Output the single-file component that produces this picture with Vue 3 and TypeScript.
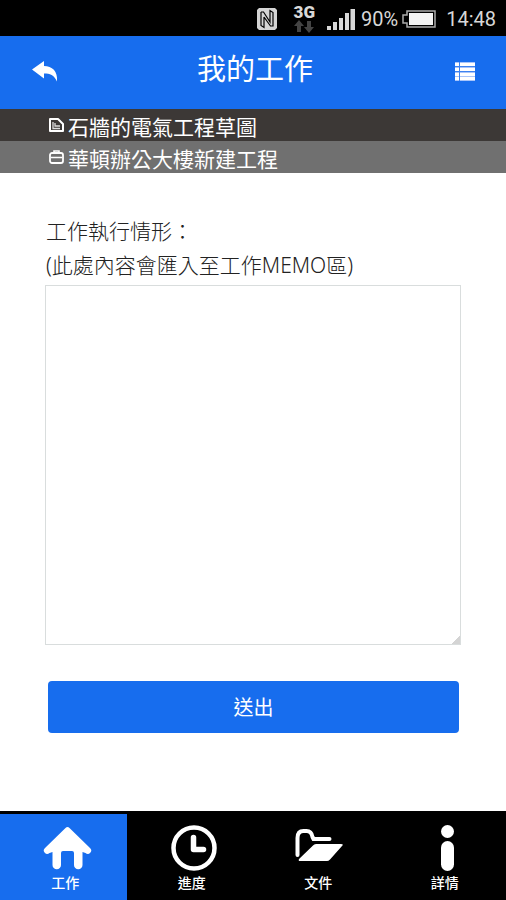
<script setup lang="ts">
import { ref } from 'vue'

type TabId = 'work' | 'progress' | 'files' | 'details'

const tabs: { id: TabId; label: string }[] = [
  { id: 'work', label: '工作' },
  { id: 'progress', label: '進度' },
  { id: 'files', label: '文件' },
  { id: 'details', label: '詳情' },
]

const activeTab = ref<TabId>('work')
const memo = ref('')
</script>

<template>
  <div class="screen">
    <div class="status">
      <svg class="nfc" viewBox="0 0 22 22" width="22" height="22">
        <path d="M1 2 3 0h16l2 2v18l-2 2H3l-2-2z" fill="#d4d4d4" />
        <path d="M5 4v13.500l3 2V9M5 4h2.500L14 14V2.500l3 2V18h-2.500L8 9" fill="none" stroke="#000" stroke-width="1.200" />
      </svg>
      <div class="network">
        <span class="network-type">3G</span>
        <svg viewBox="0 0 20 13" width="20" height="13">
          <path d="M5 0 10 6H7v6H3V6H0zM15 13 10 7h3V1h4v6h3z" fill="#444" />
        </svg>
      </div>
      <svg class="signal" viewBox="0 0 28 22" width="28" height="22">
        <path d="M0 18h4v4H0zM6 14h4v8H6zM12 10h4v12h-4zM18 5h4v17h-4zM23.500 1h4.500v21h-4.500z" fill="#d8d8d8" />
      </svg>
      <span class="percent">90%</span>
      <svg class="battery" viewBox="0 0 34 18" width="34" height="18">
        <path d="M5 1h28v16H5v-4H1V5h4z" fill="none" stroke="#aaa" stroke-width="1.500" />
        <path d="M7 3h24v12H7z" fill="#f4f4f4" />
      </svg>
      <time class="clock">14:48</time>
    </div>

    <header class="header">
      <button class="icon-button" type="button" aria-label="返回">
        <svg viewBox="0 0 26 22" width="26" height="22">
          <path d="M0 8.500 12 0v5c8 0 14 5 13 15.500C22 14 18 12.500 12 12.500v5z" fill="#fff" />
        </svg>
      </button>
      <h1>我的工作</h1>
      <button class="icon-button" type="button" aria-label="選單">
        <svg viewBox="0 0 20 19" width="20" height="19">
          <path d="M0 0h20v19H0z" fill="#a9c5fa" />
          <path d="M0 1h4v3H0zM5 1h15v3H5zM0 6h4v3H0zM5 6h15v3H5zM0 11h4v3H0zM5 11h15v3H5zM0 15h4v3H0zM5 15h15v3H5z" fill="#fff" />
          <path d="M0 4.500h20M0 9.500h20M4.500 0v19" stroke="#3d82f0" />
        </svg>
      </button>
    </header>

    <div class="crumb crumb-task">
      <svg viewBox="0 0 15 15" width="15" height="15">
        <path d="M1 1h8l5 5v7H1z" fill="none" stroke="#fff" stroke-width="2" stroke-linejoin="round" />
        <path d="M4 4v6.500h7M6 5v3h5" fill="none" stroke="#ddd" stroke-width="1.300" />
      </svg>
      <span>石牆的電氣工程草圖</span>
    </div>
    <div class="crumb crumb-project">
      <svg viewBox="0 0 15 15" width="15" height="15">
        <rect x="1" y="3" width="13" height="10" rx="2" fill="none" stroke="#fff" stroke-width="1.800" />
        <path d="M5 3V1h5v2M2 7.500h11" fill="none" stroke="#fff" stroke-width="1.600" />
      </svg>
      <span>華頓辦公大樓新建工程</span>
    </div>

    <main class="content">
      <form @submit.prevent>
        <label for="memo">工作執行情形：<br />(此處內容會匯入至工作MEMO區)</label>
        <textarea id="memo" v-model="memo"></textarea>
        <button class="submit" type="submit">送出</button>
      </form>
    </main>

    <nav class="tabs">
      <button
        v-for="tab in tabs"
        :key="tab.id"
        type="button"
        class="tab"
        :class="{ active: tab.id === activeTab }"
        @click="activeTab = tab.id"
      >
        <svg viewBox="0 0 48 48" width="48" height="48">
          <g v-if="tab.id === 'work'" fill="#fff">
            <path d="M24.500 4q2-2 4 0L49 24a3.300 3.300 0 0 1-4.500 5L41.500 28V41a4 4 0 0 1-8.500 0V29q0-2-2-2h-9q-2 0-2 2v12a4 4 0 0 1-8.500 0V28l-3 1a3.300 3.300 0 0 1-4.500-5z" />
          </g>
          <g v-else-if="tab.id === 'progress'" fill="none" stroke="#fff">
            <circle cx="26" cy="24" r="20.500" stroke-width="4.500" />
            <path d="M25.500 13.500v12H35.500" stroke-width="5.500" stroke-linecap="round" stroke-linejoin="round" />
          </g>
          <g v-else-if="tab.id === 'files'">
            <path d="M3.500 31V14q0-7 6-7h3q5 0 6 6l1 2h16" fill="none" stroke="#fff" stroke-width="4" stroke-linecap="round" />
            <path d="M22 20h25q3 0 1 2L36 35.500q-1.500 1.500-3 1.500H6q-2 0-1-2L19 21.500q1-1.500 3-1.500z" fill="#fff" />
          </g>
          <g v-else fill="#fff">
            <circle cx="26.500" cy="7.500" r="6.500" />
            <rect x="20" y="17" width="13" height="30" rx="6.500" />
          </g>
        </svg>
        <span>{{ tab.label }}</span>
      </button>
    </nav>
  </div>
</template>

<style>
body {
  margin: 0;
  background: #fff;
}
</style>

<style scoped>
.screen {
  display: flex;
  flex-direction: column;
  min-height: 100vh;
  font-family: Roboto, "Noto Sans CJK TC", sans-serif;
}

button {
  border: 0;
  padding: 0;
  color: #fff;
  font-family: inherit;
  cursor: pointer;
}

svg {
  display: block;
  flex: none;
  overflow: visible;
}

.status {
  display: flex;
  align-items: center;
  justify-content: flex-end;
  box-sizing: border-box;
  height: 36px;
  padding: 2px 10px 0 0;
  background: #000;
  color: #d8d8d8;
  font-size: 20px;
}

.nfc {
  margin-right: 16px;
}

.network {
  display: flex;
  flex-direction: column;
  align-items: center;
  gap: 1px;
  margin-right: 12px;
}

.network-type {
  font-size: 17px;
  font-weight: 900;
  line-height: 14px;
}

.signal {
  margin-right: 6px;
}

.percent {
  margin-right: 4px;
}

.battery {
  margin-right: 10px;
}

.header {
  display: flex;
  align-items: center;
  justify-content: space-between;
  box-sizing: border-box;
  height: 73px;
  padding: 0 26px 2px 30px;
  background: #176dee;
  color: #fff;
}

.header h1 {
  margin: 0;
  padding-bottom: 4px;
  font-size: 29px;
  font-weight: 400;
  line-height: 40px;
}

.icon-button {
  display: flex;
  align-items: center;
  justify-content: center;
  width: 30px;
  height: 40px;
  background: transparent;
}

.crumb {
  display: flex;
  gap: 4px;
  height: 32px;
  padding-left: 49px;
  color: #fff;
  font-size: 21px;
  line-height: 38px;
  white-space: nowrap;
}

.crumb svg {
  margin-top: 9px;
}

.crumb-task {
  background: #3c3836;
}

.crumb-project {
  background: #707070;
}

.content {
  flex: 1;
  padding: 41px 45px 38px;
}

form {
  display: flex;
  flex-direction: column;
}

label {
  padding-left: 1px;
  color: #222;
  font-family: "Noto Sans", "Noto Sans CJK TC", sans-serif;
  font-size: 21px;
  font-weight: 300;
  line-height: 34px;
}

textarea {
  box-sizing: border-box;
  width: 100%;
  height: 360px;
  margin: 3px 0 36px;
  padding: 8px;
  border: 1px solid #d9dddd;
  border-radius: 0;
  outline: 0;
  background: #fff;
  color: #333;
  font-family: inherit;
  font-size: 21px;
  resize: vertical;
}

textarea::-webkit-resizer {
  background: linear-gradient(135deg, transparent 72%, #d4d4d4 72%);
}

.submit {
  height: 52px;
  margin: 0 2px 0 3px;
  padding-bottom: 2px;
  border-radius: 4px;
  background: #176dee;
  font-size: 20px;
}

.tabs {
  display: grid;
  grid-template-columns: repeat(4, 1fr);
  padding-top: 3px;
  background: #000;
}

.tab {
  display: flex;
  flex-direction: column;
  align-items: center;
  height: 86px;
  padding: 10px 0 0 4px;
  background: #000;
  font-size: 14px;
  font-weight: 500;
  line-height: 22px;
}

.tab.active {
  background: #176dee;
}
</style>
